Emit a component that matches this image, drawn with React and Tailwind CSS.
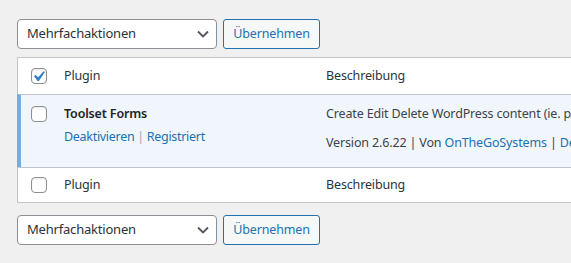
import React from "react";

function Checkbox({ checked }) {
  return (
    <span className="relative block w-4 h-4 rounded-[4px] border border-[#8c8f94] bg-white shadow-[inset_0_1px_2px_rgba(0,0,0,0.1)]">
      {checked && (
        <svg
          className="absolute left-[-4px] top-[-3px] w-[21px] h-[21px]"
          viewBox="0 0 20 20"
        >
          <path
            d="M14.83 4.89l1.34.94-5.81 8.38H9.02L5.78 9.67l1.34-1.25 2.57 2.4z"
            fill="#3582c4"
          />
        </svg>
      )}
    </span>
  );
}

function BulkBar() {
  return (
    <div className="flex gap-[6px] h-[30px]">
      <div className="w-[200px] h-[30px] flex items-center justify-between rounded-[4px] border border-[#8c8f94] bg-white pl-[9px] pr-[7px] text-[13px] tracking-[-0.2px] text-[#2c3338]">
        <span>Mehrfachaktionen</span>
        <svg width="12" height="8" viewBox="0 0 12 8">
          <path d="M1 1.5l5 5 5-5" fill="none" stroke="#50575e" strokeWidth="1.8" />
        </svg>
      </div>
      <div className="w-[97px] h-[30px] flex items-center justify-center rounded-[3px] border border-[#2271b1] bg-[#f6f7f7] text-[12.5px] tracking-[-0.15px] text-[#2271b1]">
        Übernehmen
      </div>
    </div>
  );
}

export default function App() {
  return (
    <div
      className="w-[571px] h-[263px] overflow-hidden bg-[#f0f0f1] pl-[17px] pt-[19px]"
      style={{ fontFamily: '"Noto Sans", "Open Sans", sans-serif' }}
    >
      <BulkBar />
      <div className="mt-[8px] w-[620px] border-t border-b border-[#c3c4c7] bg-white text-[12.5px] leading-[19.5px] tracking-[-0.15px]">
        {/* header */}
        <div className="flex items-center h-[36px] border-l border-[#c3c4c7] text-[#2c3338]">
          <div className="w-[46px] shrink-0 pl-[13px]">
            <Checkbox checked />
          </div>
          <div className="w-[252px] shrink-0">Plugin</div>
          <div className="pl-[10px]">Beschreibung</div>
        </div>
        {/* active row */}
        <div className="flex h-[73px] border-t border-[#c3c4c7] border-l-4 border-l-[#72aee6] bg-[#f0f6fc]">
          <div className="w-[43px] shrink-0 pl-[10px] pt-[11px]">
            <Checkbox />
          </div>
          <div className="w-[252px] shrink-0 pt-[9px]">
            <div className="font-semibold text-[#1d2327]">Toolset Forms</div>
            <div className="mt-[3px] text-[#2271b1] tracking-[-0.3px]">
              Deaktivieren <span className="text-[#a7aaad]">|</span> Registriert
            </div>
          </div>
          <div className="min-w-0 pl-[10px] pt-[9px] text-[#3c434a] whitespace-nowrap">
            <div>Create Edit Delete WordPress content (ie. posts, pages)</div>
            <div className="mt-[9px]">
              Version 2.6.22 | Von <span className="text-[#2271b1]">OnTheGoSystems</span> |{" "}
              <span className="text-[#2271b1]">Details</span>
            </div>
          </div>
        </div>
        {/* footer */}
        <div className="flex items-center h-[35px] border-t border-[#c3c4c7] border-l text-[#2c3338]">
          <div className="w-[46px] shrink-0 pl-[13px]">
            <Checkbox />
          </div>
          <div className="w-[252px] shrink-0">Plugin</div>
          <div className="pl-[10px]">Beschreibung</div>
        </div>
      </div>
      <div className="mt-[12px]">
        <BulkBar />
      </div>
    </div>
  );
}
